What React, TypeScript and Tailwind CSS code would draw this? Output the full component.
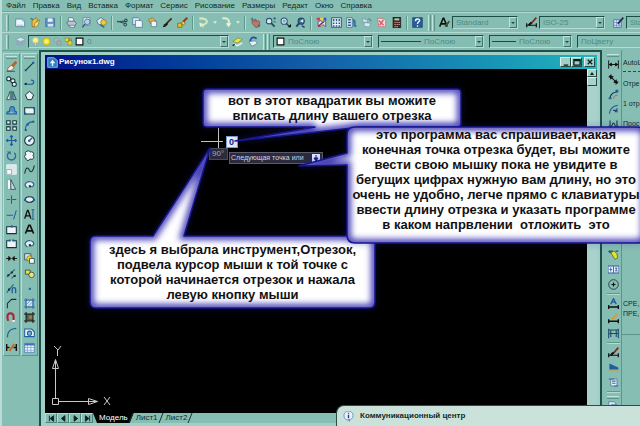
import React, { useState } from 'react';

const ink = '#12323a';
const blue = '#1f5f9e';

// 16x16 glyphs used by every toolbar
const glyphs: Record<string, React.ReactNode> = {
  newFile: <><path d="M1 3h10l3 3v8H1z" fill="#eef6fb" stroke="#3f6f93" /><path d="M11 3v3h3M3 12h9" fill="none" stroke="#7fa6c4" /></>,
  open: <><path d="M3 5l6-4 2 3-5 10H3z" fill="#e9c04a" stroke="#8a6414" /><path d="M7 9l7-5-3 9-5 2z" fill="#f6df88" stroke="#9a7420" /><path d="M1 2l4 2" stroke="#2d6fb2" strokeWidth="2" /></>,
  save: <><path d="M1 2h13v12H1z" fill="#5f93c4" stroke="#3a689b" /><path d="M4 2h7v5H4z" fill="#e9f1f7" /><path d="M4 10h8v4H4z" fill="#d5e3ee" /></>,
  print: <><path d="M4 1h6l2 6H3z" fill="#eef3f6" stroke="#4f6c7c" /><path d="M1 8l3-2h8l3 3-2 4H4z" fill="#b7c7d2" stroke="#3f5b6b" /><path d="M5 12h7l1 3H6z" fill="#f4f7f9" stroke="#4f6c7c" /></>,
  preview: <><path d="M3 1h10v11H3z" fill="#e5eef5" stroke="#54778f" /><circle cx="9" cy="7" r="4" fill="#b4d4ea" stroke="#2b5c88" /><path d="M6 10l-4 5" stroke="#2b5c88" strokeWidth="2" /></>,
  publish: <><path d="M1 5l6-4 4 2 2 6-5 3-5-2z" fill="#dfe9f2" stroke="#3c6287" /><circle cx="11" cy="8" r="4" fill="#f0cf3a" stroke="#8a6a10" /><path d="M6 11l6 4" stroke="#37648d" strokeWidth="2" /></>,
  cut: <><path d="M0 6l11 3M0 7l12-1" stroke="#3a4c58" strokeWidth="1.5" /><circle cx="13" cy="5" r="2" fill="none" stroke={ink} strokeWidth="1.4" /><circle cx="12" cy="11" r="2" fill="none" stroke={ink} strokeWidth="1.4" /></>,
  copyClip: <><path d="M1 1h8l2 2v8H1z" fill="#dce9f3" stroke="#3d6e99" /><path d="M5 5h8l2 2v8H5z" fill="#f2f7fb" stroke="#3d6e99" /></>,
  paste: <><path d="M2 4l6-3 6 6-6 6z" fill="#e5b751" stroke="#8c651a" /><path d="M6 6h6l2 2v6H6z" fill="#f1f6fa" stroke="#4a6f8f" /></>,
  brush: <><path d="M14 2L7 9" stroke="#4a2a18" strokeWidth="2.5" /><path d="M7 8l2 2-4 4-4 1 2-4z" fill="#1b1b1b" /></>,
  blockEdit: <><path d="M15 1L9 7" stroke="#9a3a1a" strokeWidth="3" /><path d="M9 6l3 3-3 3-3-3z" fill="#f0cf3a" stroke="#7b5a0c" /><path d="M1 9h6v6H1z" fill="#e5c02c" stroke="#7b5a0c" /></>,
  undo: <><path d="M2 2c6 0 11 1 11 5 0 3-4 3-6 5v3" fill="none" stroke="#d7e6b9" strokeWidth="3" /><path d="M2 8l6 2-5 5z" fill="#e7efcc" /></>,
  redo: <><path d="M2 2c7-1 11 2 9 8" fill="none" stroke="#e2ecc6" strokeWidth="3" /><path d="M7 9h8l-4 6z" fill="#eef3d6" /></>,
  pan: <><path d="M3 5l2-1 2 3V3l2 1 1 3 2-2 2 2v5l-3 3H8L3 9z" fill="#b9776e" stroke="#7d4640" /><path d="M1 3h4M3 1v4M11 13h4M13 11v4" stroke="#275f8f" /></>,
  zoomRt: <><circle cx="6" cy="6" r="4" fill="#d6e9f2" stroke="#2a5475" strokeWidth="1.5" /><path d="M9 9l5 5" stroke="#234763" strokeWidth="2.5" /><path d="M12 2h4M14 0v4M12 7h4" stroke="#1b4c7b" /></>,
  zoomWin: <><circle cx="6" cy="6" r="4.500" fill="#d6e9f2" stroke="#2a5475" strokeWidth="1.5" /><path d="M4 4h4v4H4z" fill="#7ba9c9" /><path d="M9 9l4 4" stroke="#234763" strokeWidth="2" /><path d="M11 15h5v-5z" fill="#0b0b0b" /></>,
  zoomPrev: <><circle cx="9" cy="6" r="4.500" fill="#2f6aa3" stroke="#1f3f63" strokeWidth="1.5" /><path d="M7 6l5-3v5z" fill="#e6f1f8" /><path d="M6 9l-4 5" stroke="#234763" strokeWidth="3" /><path d="M10 13l4 2" stroke="#1f3f63" strokeWidth="2" /></>,
  props: <><path d="M1 1h5v4H1z" fill="#d93a5a" /><path d="M6 1h5v4H6z" fill="#f0d23c" /><path d="M11 1h4v4h-4z" fill="#3a58c8" /><path d="M3 7l4-2 3 3 4-3v9l-4-3-3 3-4-2z" fill="#e9dfe4" stroke="#5b2c6b" /><path d="M3 14l8-7" stroke="#8a2a52" strokeWidth="2" /></>,
  design: <><path d="M1 1h14v14H1z" fill="#eaf3f9" stroke="#2b5a84" strokeWidth="1.5" /><path d="M4 3v3M4 8v2M4 12v2M8 3v3M8 8v2M8 12v2M12 3v3M12 8v2M12 12v2" stroke="#27557f" strokeWidth="2" /></>,
  palettes: <><path d="M1 1h8v14H1z" fill="#eaf3f9" stroke="#2b5a84" /><path d="M3 4h4M3 8h4M3 12h4" stroke="#27557f" strokeWidth="2" /><path d="M10 2l4 3v6l2 3h-5z" fill="#3e6f9c" /></>,
  sheets: <><path d="M2 2l8 2-1 5-7-2z" fill="#c9dbe2" stroke="#6c93a1" /><path d="M5 8l9 1-2 6-8-2z" fill="#dbe8ec" stroke="#6c93a1" /><path d="M11 2l4 4" stroke="#5e8595" strokeWidth="2" /></>,
  markup: <><path d="M2 2h9l3 3v9H4z" fill="#f2d9d9" stroke="#c06a70" /><path d="M4 5l7 7M11 4l-6 8" stroke="#d8606a" strokeWidth="2" /></>,
  calc: <><path d="M3 0h11v16H3z" fill="#3b2b2a" stroke="#1c1413" /><path d="M5 2h7v3H5z" fill="#b6c8a5" /><path d="M5 8h2M8 8h2M11 8h2M5 11h2M8 11h2M11 11h2M5 14h2M8 14h2" stroke="#d98f86" strokeWidth="1.6" /></>,
  help: <><path d="M1 1h14v14H1z" fill="#2a5d98" stroke="#173c69" /><path d="M5 6c0-4 6-4 6-1 0 2-3 2-3 5M8 12v2" fill="none" stroke="#f2f7fb" strokeWidth="2" /></>,
  textStyle: <><path d="M1 14L6 2h1l5 12M3 10h7" fill="none" stroke="#111" strokeWidth="2.2" /><path d="M15 6l-6 8" stroke="#4b4b3c" strokeWidth="2.500" /></>,
  dimStyle: <><path d="M1 12h14M1 9v6M15 9v6" stroke="#111" strokeWidth="1.8" /><path d="M15 1L8 9" stroke="#7d2b2b" strokeWidth="2.500" /><path d="M8 8L4 12" stroke="#111" strokeWidth="3" /></>,
  tableStyle: <><path d="M1 4h11v11H1z" fill="#e2ebf8" stroke="#3455a0" /><path d="M1 8h11M1 12h11M5 4v11M9 4v11" stroke="#5f7fc1" /><path d="M15 1L7 10" stroke="#2a2a55" strokeWidth="2.500" /></>,
  layers: <><path d="M1 5l7-3 7 3-7 3z" fill="#dbe6ee" stroke="#7f9fb6" /><path d="M1 8l7 3 7-3M1 11l7 3 7-3" fill="none" stroke="#8aa8c0" strokeWidth="2" /></>,
  bulb: <><circle cx="8" cy="6" r="5" fill="#f7f2a0" stroke="#d3c65c" /><path d="M6 11h4v4H6z" fill="#e6edf0" stroke="#7c8c8f" /></>,
  sun: <><circle cx="8" cy="8" r="6.500" fill="#f5e12c" stroke="#b69a10" /><circle cx="8" cy="8" r="3" fill="#fbf08a" /></>,
  vpFreeze: <><circle cx="6" cy="6" r="4" fill="#a8bfb7" stroke="#7d9c94" /><path d="M7 7h7v7H7z" fill="#9fb2b5" stroke="#74908f" /></>,
  lock: <><path d="M2 2h6v6H2z" fill="#f1df3a" stroke="#8d7c10" /><path d="M7 7h7v7H7z" fill="#ecd53a" stroke="#8d7c10" /><path d="M9 7V4c0-2 4-2 4 0v3" fill="none" stroke="#8d7c10" strokeWidth="1.5" /></>,
  swatch: <path d="M2 2h12v12H2z" fill="#fff" stroke="#111" strokeWidth="2" />,
  layerCur: <><path d="M1 8l8-5 6 2-7 5z" fill="#f2e14a" stroke="#7d8f22" /><path d="M2 11l6 3 7-4" fill="none" stroke="#e9f1ee" strokeWidth="2" /><path d="M1 14l3-2" stroke="#123" strokeWidth="2" /></>,
  layerPrev: <><path d="M14 4c-6-5-11 1-8 6" fill="none" stroke="#234f9a" strokeWidth="2.500" /><path d="M3 8l9-1 3 4-8 4z" fill="#e9f0f5" stroke="#54789c" /></>,

  erase: <><path d="M15 1L8 9" stroke="#b8641c" strokeWidth="4" /><path d="M8 6l4 4-5 4H2l1-4z" fill="#f4efe0" stroke="#8c4a3a" /><path d="M1 15h12" stroke={ink} /></>,
  copyObj: <><circle cx="4" cy="4" r="3" fill="#e8f1f6" stroke={ink} strokeWidth="1.5" /><circle cx="10" cy="7" r="3" fill="#e8f1f6" stroke={ink} strokeWidth="1.5" /><circle cx="12" cy="12" r="3" fill="#e8f1f6" stroke={ink} strokeWidth="1.5" /></>,
  mirror: <><path d="M6 2v12H1z" fill="#dce9f0" stroke={ink} /><path d="M10 2v12h5z" fill="#7ba6c6" stroke={ink} /><path d="M8 1v14" stroke={blue} /></>,
  offset: <><path d="M1 13c0-4 2-4 4-4 0-9 8-9 8 0 3 0 3 2 3 4z" fill="#4f8fbe" stroke={blue} strokeWidth="1.5" /><path d="M5 12c1-3 5-4 6 0" fill="#8fbdd6" /></>,
  array: <path d="M1 1h5v5H1zM10 1h5v5h-5zM1 10h5v5H1zM10 10h5v5h-5z" fill="#eef5f8" stroke={ink} strokeWidth="1.5" />,
  move: <path d="M8 1v14M1 8h14M6 3l2-2 2 2M6 13l2 2 2-2M3 6L1 8l2 2M13 6l2 2-2 2" fill="none" stroke={blue} strokeWidth="1.8" />,
  rotate: <><path d="M4 4a6 6 0 1 0 8 0" fill="none" stroke="#2f6c98" strokeWidth="2" /><path d="M1 2h6v5z" fill="#2f6c98" /></>,
  scale: <><path d="M1 1h14v14H1z" fill="#dbe7ea" stroke="#f4f9f9" /><path d="M1 8h7v7H1z" fill="#f8fbfc" stroke="#7d9aa5" /></>,
  stretch: <><path d="M2 1h5v14H2z" fill="#f5f9fb" stroke="#6f8f9a" /><path d="M7 1l7 14H7z" fill="#c7dae3" stroke={ink} /></>,
  trim: <path d="M1 8h5M9 8h6M8 2v12" fill="none" stroke={blue} strokeWidth="1.5" />,
  extend: <path d="M1 9h9M15 2l-4 13" fill="none" stroke={blue} strokeWidth="1.5" />,
  breakPt: <><path d="M1 4h14v10H1z" fill="#eef4f8" stroke={ink} strokeWidth="1.5" /><path d="M7 2h3v3H7z" fill={blue} /></>,
  breakObj: <><path d="M5 4H1v10h14V4h-4" fill="#eef4f8" stroke={ink} strokeWidth="1.5" /><path d="M4 2h3v3H4zM9 2h3v3H9z" fill={blue} /></>,
  join: <path d="M0 8h6M16 8h-6M4 5l3 3-3 3zM12 5L9 8l3 3z" fill="#111" stroke="#111" strokeWidth="1.3" />,
  chamferA: <><path d="M1 13L13 2M8 15l6-5" stroke={blue} strokeWidth="1.5" /><path d="M2 9h3v3H2zM7 5h3v3H7zM11 10h3v3h-3z" fill={ink} /></>,
  chamferB: <><path d="M1 14L11 2" stroke={blue} strokeWidth="1.5" /><path d="M3 8h3v3H3z" fill={ink} /><path d="M9 15V9c0-3 5-3 5 0v6" fill="none" stroke={blue} strokeWidth="2" /></>,
  chamfer: <path d="M2 15V8l6-6h7" fill="none" stroke={ink} strokeWidth="1.5" />,
  magnet: <><path d="M3 13L2 7c0-7 9-7 9 0v5" fill="none" stroke="#b02334" strokeWidth="3" /><path d="M9 13h4" stroke="#f2f2f2" strokeWidth="2.500" /></>,
  fillet: <path d="M2 15C2 7 7 2 15 2" fill="none" stroke={blue} strokeWidth="2" />,
  explode: <><path d="M1 3v10M15 3v10M1 8h4M11 8h4" stroke="#111" strokeWidth="2" /><path d="M12 3L5 13" stroke="#cf6a1e" strokeWidth="3" /></>,

  line: <><path d="M2 14L14 2" stroke={ink} strokeWidth="1.6" /><path d="M1 12h3v3H1zM12 1h3v3h-3z" fill={blue} /></>,
  pline: <><path d="M1 12h9c6 0 5-7 0-6" fill="none" stroke={blue} strokeWidth="1.8" /><path d="M1 10h3v3H1z" fill={ink} /></>,
  polygon: <path d="M8 2l6 5-3 7H5L2 7z" fill="#f0f6f9" stroke={ink} strokeWidth="1.4" />,
  rect: <><path d="M1 4h14v9H1z" fill="#e8f1f6" stroke={ink} strokeWidth="1.5" /><path d="M0 11h3v3H0zM13 3h3v3h-3z" fill={blue} /></>,
  arc: <><path d="M2 14C2 7 7 3 14 2" fill="none" stroke={blue} strokeWidth="1.5" /><path d="M1 13h3v3H1zM4 5h3v3H4zM12 1h3v3h-3z" fill={blue} /></>,
  circle: <><circle cx="8" cy="8" r="7" fill="#e8f1f6" stroke={ink} strokeWidth="1.6" /><path d="M8 8l4-4" stroke={blue} strokeWidth="2" /><path d="M6 7h3v3H6z" fill={blue} /></>,
  cloud: <path d="M4 2c3-2 5 0 5 1 4-2 7 3 4 5 3 3 0 7-4 5-2 4-7 2-6-1-4-1-2-5 0-5-2-2-1-5 1-5z" fill="#f2f7fa" stroke={ink} strokeWidth="1.4" />,
  spline: <path d="M1 14C3 3 6 5 8 9s5 3 7-7" fill="none" stroke={ink} strokeWidth="1.5" />,
  ellipse: <><ellipse cx="8" cy="8" rx="6" ry="4" fill="#e3eef6" stroke={ink} strokeWidth="1.8" /><path d="M0 7h3v3H0zM13 7h3v3h-3z" fill={blue} /></>,
  ellArc: <><path d="M5 13C-3 8 5 3 9 4c8 1 6 9-1 7" fill="#e3eef6" stroke="#2d5f88" strokeWidth="1.7" /><path d="M7 9h3v3H7z" fill={ink} /></>,
  mtextI: <><path d="M1 14L5 2h1l4 12M2 10h7" fill="none" stroke="#111" strokeWidth="2" /><path d="M11 1h4M13 1v14M11 15h4" stroke={blue} strokeWidth="1.5" /></>,
  mtext: <path d="M2 14L7 2h2l5 12M4 10h8" fill="none" stroke="#111" strokeWidth="2.200" />,
  insBlock: <><path d="M1 1h9v9H1z" fill="#dbe7ef" stroke={ink} /><circle cx="8" cy="8" r="4" fill="#f0d83c" stroke="#6f6212" /><path d="M8 8h7v7H8z" fill="#f4f8fa" stroke={ink} /></>,
  mkBlock: <><path d="M2 3h7v6H2z" fill="#f0d83c" stroke={ink} /><circle cx="11" cy="10" r="4" fill="#f3e27a" stroke={ink} /></>,
  point: <path d="M7 7h3v3H7z" fill={blue} />,
  hatch: <><path d="M3 3h10v10H3z" fill="#d6e6f1" stroke={blue} /><path d="M0 3h16M0 13h16M3 0v16M13 0v16" stroke={blue} /><path d="M4 9l5-5M6 12l6-6" stroke="#4e86b4" /></>,
  gradient: <><path d="M3 3h10v10H3z" fill="#5b5a4c" /><path d="M0 3h16M0 13h16M3 0v16M13 0v16" stroke="#191919" strokeWidth="1.5" /><path d="M7 5h5v5H7z" fill="#8b8260" /></>,
  region: <><path d="M1 3h10l4 4v7H1z" fill="#e5eff5" stroke={blue} strokeWidth="1.5" /><circle cx="8" cy="9" r="3" fill="#86b3d1" stroke={blue} strokeWidth="1.5" /></>,
  table: <><path d="M1 2h14v13H1z" fill="#f5f9fd" stroke="#3b6fba" /><path d="M1 2h14v3H1z" fill="#3b6fba" /><path d="M1 8h14M1 12h14M5 4v11M10 4v11" stroke="#6e98d0" /></>,

  dimLin: <path d="M1 2v12M15 2v12M2 8h12M2 8l3-2v4zM14 8l-3-2v4z" fill="#111" stroke="#111" strokeWidth="1.400" />,
  dimAl: <path d="M1 5l4-4M11 15l4-4M3 3l10 10M3 3l4 1-3 3zM13 13l-4-1 3-3z" fill="#111" stroke="#111" strokeWidth="1.500" />,
  dimArc: <><path d="M3 14c0-6 4-9 10-10" fill="none" stroke={ink} strokeWidth="1.5" /><path d="M8 14c0-3 2-5 6-5" fill="none" stroke="#b04a3a" /><path d="M11 1h4v4h-4zM1 12h4v3H1z" fill={blue} /></>,
  dimRad: <><path d="M2 14C3 7 6 3 14 2" fill="none" stroke={blue} strokeWidth="1.7" /><path d="M7 9h6M13 6v6M9 9l3 3" stroke="#163f74" strokeWidth="1.500" /></>,
  dimOrd: <><path d="M3 2v12M13 2v12M3 12c3 0 3-6 5-6s2 6 5 6" fill="none" stroke={ink} strokeWidth="1.500" /><path d="M1 9h4v4H1zM11 9h4v4h-4z" fill={blue} /></>,
  leader: <><path d="M4 5l5-2 4 4 1 6-4 2-3-5z" fill="#e8e036" stroke="#3b5b1b" /><path d="M1 3h6M11 3h4M1 3l3 3" stroke="#1d5a50" strokeWidth="2" /></>,
  tol: <><path d="M0 3h16v10H0z" fill="#edf3fa" stroke="#2f5fa5" strokeWidth="1.500" /><path d="M8 3v10M2 8h4M4 5v6M10 6h4M10 10h4M12 6v4" stroke="#2f5fa5" strokeWidth="1.300" /></>,
  center: <><circle cx="8" cy="8" r="7" fill="none" stroke={ink} strokeWidth="1.200" /><path d="M8 5v6M5 8h6" stroke="#111" strokeWidth="1.800" /></>,
  dimText: <><path d="M4 9l4-8 4 8M5 6h6" fill="none" stroke={blue} strokeWidth="2" /><path d="M1 10v6M15 10v6M1 13h14" stroke="#111" strokeWidth="2" /></>,
  dimEdit: <><path d="M1 9v6M15 9v6M1 12h14" stroke="#111" strokeWidth="2" /><path d="M14 1L6 9" stroke="#e39a2c" strokeWidth="3" /></>,
  dimUpd: <path d="M1 1v14M15 1v14M4 3v10M12 3v10M1 8h14M1 3h14" fill="none" stroke="#1d4b6a" strokeWidth="1.600" />,
  dimIso: <><path d="M2 2v9h13v-3z" fill={blue} /><path d="M1 13h14" stroke="#c8a24c" strokeWidth="2" /></>,
  script: <><path d="M4 3h9v10H4z" fill="#e6eef6" stroke="#3f6a99" /><path d="M1 3h8M6 6h5M6 9h5M9 13h6" stroke="#3f6a99" strokeWidth="1.500" /></>,
};

const Tool = ({ name, tall }: { name: string; tall?: boolean }) => (
  <button type="button" aria-label={name} className={`flex shrink-0 items-center justify-center w-[15px] ${tall ? 'h-[15px]' : 'h-4'}`}>
    <svg viewBox="0 0 16 16" className="w-[11px] h-[11px]">{glyphs[name]}</svg>
  </button>
);

const Sep = () => <div className="shrink-0 w-0.5 h-[14px] mx-0.5 border-l border-r border-l-[#5e998e] border-r-[#b3dad3]" />;

const Grip = () => (
  <div className="flex shrink-0 gap-px h-4">
    <div className="w-[3px] border-l border-r border-l-[#c3e3dd] border-r-[#5b968b]" />
    <div className="w-[3px] border-l border-r border-l-[#c3e3dd] border-r-[#5b968b]" />
  </div>
);

interface ComboProps {
  label: string;
  value: string;
  className: string;
  children?: React.ReactNode;
}

const Combo: React.FC<ComboProps> = ({ label, value, className, children }) => (
  <label className={`flex items-center h-[13px] pl-0.5 border border-t-[#1d4d47] border-l-[#1d4d47] border-b-[#b8dcd5] border-r-[#b8dcd5] bg-[#86bdb2] overflow-hidden ${className}`}>
    {children}
    <select aria-label={label} className="appearance-none flex-1 min-w-0 h-full pl-px text-[8px] leading-[10px] text-[#4d8d82] bg-transparent outline-none">
      <option>{value}</option>
    </select>
    <span className="flex shrink-0 items-center justify-center w-2 h-full border border-t-[#c3e3dd] border-l-[#c3e3dd] border-b-[#3e7469] border-r-[#3e7469]">
      <svg viewBox="0 0 4 2" className="w-1 h-0.5"><path d="M0 0h4L2 2z" fill="#234b44" /></svg>
    </span>
  </label>
);

const LineSample = ({ className }: { className: string }) => <div className={`shrink-0 h-px bg-[#24463f] ${className}`} />;

interface CalloutProps {
  id: string;
  shape: string;
  className: string;
  lines: string[];
}

// Speech bubble with a glowing inner rim; the tail is part of the outline
const Callout: React.FC<CalloutProps> = ({ id, shape, className, lines }) => (
  <div className={`absolute ${className}`}>
    <svg className="absolute inset-0 w-full h-full overflow-visible">
      <defs>
        <clipPath id={`${id}-clip`}><path d={shape} /></clipPath>
        <filter id={`${id}-glow`} x="-20%" y="-50%" width="140%" height="200%"><feGaussianBlur stdDeviation="3" /></filter>
      </defs>
      <path d={shape} fill="none" stroke="#2323a0" strokeWidth="2" opacity="0.5" filter={`url(#${id}-glow)`} />
      <path d={shape} fill="#fff" />
      <g clipPath={`url(#${id}-clip)`}>
        <path d={shape} fill="none" stroke="#4a43b8" strokeWidth="8" filter={`url(#${id}-glow)`} />
      </g>
      <path d={shape} fill="none" stroke="#16168e" strokeWidth="1.5" strokeLinejoin="round" />
    </svg>
    <p className="relative text-center font-bold text-[13px] leading-[15px] text-[#111] whitespace-pre">
      {lines.map(line => <span key={line} className="block">{line}</span>)}
    </p>
  </div>
);

const menus = ['Файл', 'Правка', 'Вид', 'Вставка', 'Формат', 'Сервис', 'Рисование', 'Размеры', 'Редакт', 'Окно', 'Справка'];

const modifyTools = ['erase', 'copyObj', 'mirror', 'offset', 'array', 'move', 'rotate', 'scale', 'stretch', 'trim', 'extend', 'breakPt', 'breakObj', 'join', 'chamferA', 'chamferB', 'chamfer', 'magnet', 'fillet', 'explode'];
const drawTools = ['line', 'pline', 'polygon', 'rect', 'arc', 'circle', 'cloud', 'spline', 'ellArc', 'ellipse', 'mtextI', 'mtext', 'ellArc', 'insBlock', 'mkBlock', 'point', 'hatch', 'gradient', 'region', 'table'];

const standardGroups = [
  ['newFile', 'open', 'save'],
  ['print', 'preview', 'publish'],
  ['cut', 'copyClip', 'paste', 'brush', 'blockEdit'],
];
const viewGroups = [
  ['pan', 'zoomRt', 'zoomWin', 'zoomPrev'],
  ['props', 'design', 'palettes', 'sheets', 'markup', 'calc'],
];

const TopGrip = () => (
  <div className="w-full px-0.5 pt-0.5">
    <div className="h-[3px] border-t border-b border-t-[#c3e3dd] border-b-[#5b968b]" />
  </div>
);

const ToolColumn = ({ tools }: { tools: string[] }) => (
  <div className="flex flex-col items-center w-[17px] h-[303px] border border-t-[#b8dcd5] border-l-[#b8dcd5] border-b-[#5b968b] border-r-[#5b968b]">
    <TopGrip />
    <div className="flex flex-col flex-1 justify-around">
      {tools.map((t, i) => (
        <button key={i} type="button" aria-label={t} className="flex items-center justify-center w-[15px] h-[14px]">
          <svg viewBox="0 0 16 16" className="w-[11px] h-[11px]">{glyphs[t]}</svg>
        </button>
      ))}
    </div>
  </div>
);

const HSep = () => <div className="shrink-0 w-[13px] h-0.5 my-px border-t border-b border-t-[#5e998e] border-b-[#b3dad3]" />;

const DropArrow = () => (
  <button type="button" aria-label="history" className="flex shrink-0 items-center justify-center w-2 h-4">
    <svg viewBox="0 0 4 3" className="w-1 h-[3px]"><path d="M0 0h4L2 3z" fill="#d9e6bb" /></svg>
  </button>
);

const navArrows = ['M2 1v8M8 1v8L3 5z', 'M7 1v8L2 5z', 'M3 1v8l5-4z', 'M2 1v8l5-4zM8 1v8'];

const App: React.FC = () => {
  const [length, setLength] = useState('0');
  const [sheet, setSheet] = useState('Модель');

  return (
    <div className="relative flex flex-col h-screen overflow-hidden bg-[#87beb3] border-l-2 border-[#b9dcd6] font-['Liberation_Sans',Arial,sans-serif] text-[8px] text-[#0f2b28]">
      <nav className="flex shrink-0 items-center gap-[7px] h-3 pl-1 leading-[10px] border-b border-[#6da89d]">
        {menus.map(m => <button key={m} type="button">{m}</button>)}
      </nav>

      <div className="flex shrink-0 items-center h-5 pl-1 border-t border-[#b3dad3]">
        <div className="shrink-0 w-[3px] h-4 mr-1 border-l border-r border-l-[#c3e3dd] border-r-[#5b968b]" />
        {standardGroups.map((group, i) => (
          <React.Fragment key={i}>
            {group.map(t => <Tool key={t} name={t} />)}
            <Sep />
          </React.Fragment>
        ))}
        <Tool name="undo" />
        <DropArrow />
        <Tool name="redo" />
        <DropArrow />
        <Sep />
        {viewGroups.map((group, i) => (
          <React.Fragment key={i}>
            {group.map(t => <Tool key={t} name={t} />)}
            <Sep />
          </React.Fragment>
        ))}
        <Tool name="help" />
        <div className="flex shrink-0 items-center pl-[3px] pr-0.5"><Grip /></div>
        <Tool name="textStyle" />
        <Combo label="Стиль текста" value="Standard" className="shrink-0 w-[66px] mr-1.5" />
        <Tool name="dimStyle" />
        <Combo label="Размерный стиль" value="ISO-25" className="shrink-0 w-[66px] mr-1.5" />
        <Tool name="tableStyle" />
        <Combo label="Стиль таблиц" value="Standard" className="shrink-0 w-[66px]" />
      </div>

      <div className="flex shrink-0 items-center h-[18px] pl-1 border-t border-[#b3dad3]">
        <div className="shrink-0 w-[3px] h-[14px] mr-1 border-l border-r border-l-[#c3e3dd] border-r-[#5b968b]" />
        <Tool name="layers" />
        <Combo label="Слой" value="0" className="shrink-0 w-[201px] mr-px">
          {['bulb', 'sun', 'vpFreeze', 'lock', 'swatch'].map(g => (
            <svg key={g} viewBox="0 0 16 16" className="shrink-0 w-[9px] h-[9px] mr-0.5">{glyphs[g]}</svg>
          ))}
        </Combo>
        <Tool name="layerCur" />
        <Tool name="layerPrev" />
        <div className="flex shrink-0 items-center px-[3px]"><Grip /></div>
        <Combo label="Цвет" value="ПоСлою" className="shrink-0 w-[100px] mr-[5px]">
          <svg viewBox="0 0 16 16" className="shrink-0 w-[9px] h-[9px] mr-0.5">{glyphs.swatch}</svg>
        </Combo>
        <Combo label="Тип линий" value="ПоСлою" className="shrink-0 w-[106px] mr-[5px]">
          <LineSample className="w-10 mr-0.5" />
        </Combo>
        <Combo label="Вес линий" value="ПоСлою" className="shrink-0 w-[83px] mr-[5px]">
          <LineSample className="w-6 mr-0.5" />
        </Combo>
        <Combo label="Стиль печати" value="ПоЦвету" className="shrink-0 w-[83px]" />
      </div>

      <div className="flex flex-1 min-h-0">
        <div className="flex shrink-0 gap-px pt-0.5 pl-px border-t border-[#6da89d]">
          <ToolColumn tools={modifyTools} />
          <ToolColumn tools={drawTools} />
        </div>

        <section className="flex flex-col flex-1 min-w-0 ml-px pt-[3px] pl-1 pr-[3px] border-2 border-b-0 border-[#1f4f49] bg-[#9fd0c8]">
          <header className="flex shrink-0 items-center h-[14px] pl-0.5 pr-0.5 bg-linear-to-r from-[#08108a] via-[#1560a8] to-[#22b4bd]">
            <svg viewBox="0 0 16 16" className="w-[11px] h-[11px]">
              <path d="M1 1h9l5 4v10H1z" fill="#2e7fc0" stroke="#bfe0f2" />
              <path d="M8 4l4 5H9v4H7V9H4z" fill="#e8f5fb" />
            </svg>
            <h1 className="flex-1 pl-px font-bold text-white leading-[10px]">Рисунок1.dwg</h1>
            {['M2 8h5', 'M1 2h7v6H1zM1 3h7', 'M2 2l5 5M7 2L2 7'].map((d, i) => (
              <button key={d} type="button" aria-label={['Свернуть', 'Развернуть', 'Закрыть'][i]} className={`flex items-center justify-center w-[11px] h-[10px] bg-[#9fcfc7] border border-t-[#dff1ee] border-l-[#dff1ee] border-b-[#234b44] border-r-[#234b44] ${i === 2 ? 'ml-0.5' : ''}`}>
                <svg viewBox="0 0 9 9" className="w-2 h-2"><path d={d} fill="none" stroke="#0b1f1c" strokeWidth="1.5" /></svg>
              </button>
            ))}
          </header>

          <div className="flex flex-1 min-h-0">
            <div className="relative flex flex-col flex-1 justify-end bg-black">
              <svg viewBox="0 0 70 70" className="w-[70px] h-[70px] mb-1" fill="none" stroke="#c9c9c9">
                <path d="M7.500 59.500h6v6h-6zM10.500 59V21M14 62.500h38" />
                <path d="M7.500 29.500l3-9 3 9zM43.500 59.500l9 3-9 3z" />
                <path d="M9 7l4 4 3-4M12.500 11v6M59 58l6 8M65 58l-6 8" />
              </svg>
            </div>
            <div className="flex flex-col w-[10px] bg-[#a9d2cb]">
              <button type="button" aria-label="Вверх" className="flex items-center justify-center h-2 border border-t-[#dff1ee] border-l-[#dff1ee] border-b-[#234b44] border-r-[#234b44]">
                <svg viewBox="0 0 4 3" className="w-1 h-[3px]"><path d="M0 3h4L2 0z" fill="#0b1f1c" /></svg>
              </button>
              <div className="h-[9px] border border-t-[#dff1ee] border-l-[#dff1ee] border-b-[#234b44] border-r-[#234b44]" />
            </div>
          </div>

          <footer className="flex shrink-0 items-center h-[10px] mb-[3px] bg-[#87beb3] text-[8px] leading-[10px]">
            {navArrows.map(d => (
              <button key={d} type="button" aria-label="Листать" className="flex items-center justify-center w-3 h-[10px] border border-t-[#b8dcd5] border-l-[#b8dcd5] border-b-[#4d857a] border-r-[#4d857a]">
                <svg viewBox="0 0 10 10" className="w-[7px] h-[7px]"><path d={d} fill="#0b1f1c" stroke="#0b1f1c" strokeWidth="1.2" /></svg>
              </button>
            ))}
            {['Модель', 'Лист1', 'Лист2'].map(s => (
              <button
                key={s}
                type="button"
                onClick={() => setSheet(s)}
                className={`flex items-center h-[10px] ${s === 'Модель' ? 'pl-1.5' : 'pl-0.5'} ${sheet === s ? 'bg-black text-white [clip-path:polygon(0_0,100%_0,calc(100%-4px)_100%,4px_100%)]' : ''}`}
              >
                {s}
                <svg viewBox="0 0 6 10" className="w-1.5 h-[10px]"><path d="M1 10L5 0" stroke="#12322d" /></svg>
              </button>
            ))}
          </footer>
        </section>

        <aside className="flex shrink-0 w-[35px] ml-[3px] overflow-hidden">
          <div className="flex shrink-0 flex-col items-center w-[17px] pt-0.5 border-r border-[#5b968b]">
            <TopGrip />
            {['dimLin', 'dimAl', 'dimArc', 'dimRad', 'dimOrd'].map(t => <Tool key={t} name={t} tall />)}
            <div className="shrink-0 h-[115px]" />
            {['leader', 'tol', 'center'].map(t => <Tool key={t} name={t} tall />)}
            <HSep />
            {['dimText', 'dimEdit', 'dimUpd'].map(t => <Tool key={t} name={t} tall />)}
            <HSep />
            {['dimStyle', 'dimIso', 'script'].map(t => <Tool key={t} name={t} tall />)}
            <HSep />
            <TopGrip />
            <Tool name="copyClip" tall />
          </div>
          <div className="flex flex-col flex-1 h-[285px] pl-px pt-2 text-[7px] leading-[10px] whitespace-nowrap border-b border-[#5b968b]">
            <p>AutoL</p>
            <div className="mt-[3px] border-t border-dashed border-[#1f4f49]" />
            <p className="mt-[7px]">Отре</p>
            <p className="mt-[10px]">1 отр</p>
            <p className="mt-[10px]">Прос</p>
            <p className="mt-auto">СРЕ,</p>
            <p className="mb-[15px]">ПРЕ,</p>
          </div>
        </aside>
      </div>

      {/* dynamic input next to the crosshair */}
      <svg className="absolute left-[199px] top-[128px] w-[22px] h-[23px]" viewBox="0 0 22 23"><path d="M0 13.500h22M17.500 0v23" stroke="#c4c4bc" /></svg>
      <input aria-label="Длина" value={length} onChange={e => setLength(e.target.value)} className="absolute left-[224px] top-[136px] w-3 h-3 pl-0.5 text-[9px] leading-[9px] font-bold text-[#16168e] bg-[#e4efff] border border-[#7e9ad0] outline-none" />
      <div className="absolute left-[207px] top-[148px] w-[19px] h-3 pl-0.5 leading-[10px] text-[#a9a9b8] bg-[#2b2b3d] border border-[#4a4a5e]">90°</div>
      <div className="absolute left-[227px] top-[152px] flex items-center gap-2 h-3 pl-px pr-0.5 text-[7px] leading-[10px] whitespace-nowrap text-[#d3d3e0] bg-[#2b2b3d] border border-[#5a5a70]">
        Следующая точка или
        <svg viewBox="0 0 8 8" className="w-2 h-2"><path d="M0 0h8v8H0z" fill="#dfe6ff" /><path d="M4 1v3M2 4h4L4 7z" fill="#16168e" stroke="#16168e" /></svg>
      </div>

      <Callout
        id="length"
        shape="M4 0H254Q258 0 258 4V34Q258 38 254 38H158L32 52L112 38H4Q0 38 0 34V4Q0 0 4 0Z"
        className="left-[201px] top-[89px] w-[258px] h-[38px] pt-1"
        lines={['вот в этот квадратик вы можите', 'вписать длину вашего отрезка']}
      />
      <Callout
        id="start"
        shape="M6 0H63L120 -88L94 0H279Q285 0 285 6V66Q285 72 279 72H6Q0 72 0 66V6Q0 0 6 0Z"
        className="left-[88px] top-[236px] w-[285px] h-[72px] pt-1.5"
        lines={['здесь я выбрала инструмент,Отрезок,', 'подвела курсор мыши к той точке с', 'которой начинается отрезок и нажала', 'левую кнопку мыши']}
      />
      <Callout
        id="next"
        shape="M8 0H290Q298 0 298 8V108Q298 116 290 116H8Q0 116 0 108V38L-48 39L0 26V8Q0 0 8 0Z"
        className="left-[345px] top-[127px] w-[298px] h-[116px]"
        lines={['это программа вас спрашивает,какая', 'конечная точка отрезка будет, вы можите', 'вести свою мышку пока не увидите в', 'бегущих цифрах нужную вам длину, но это', 'очень не удобно, легче прямо с клавиатуры', 'ввести длину отрезка и указать программе', 'в каком напрвлении  отложить  это']}
      />

      <div role="status" className="absolute right-0 bottom-0 flex items-center gap-1.5 w-[304px] h-[21px] pl-1.5 bg-[#cbe2db] border-t border-l border-[#2a4d47] rounded-tl-lg">
        <svg viewBox="0 0 12 12" className="w-[11px] h-[11px]">
          <circle cx="6" cy="5" r="5" fill="#eaf1fb" stroke="#6c8cb8" />
          <path d="M5 9l2 3 1-3z" fill="#6c8cb8" />
          <path d="M6 2v1M6 4v4" stroke="#173a8c" strokeWidth="1.5" />
        </svg>
        <strong>Коммуникационный центр</strong>
      </div>
    </div>
  );
};

export default App;
